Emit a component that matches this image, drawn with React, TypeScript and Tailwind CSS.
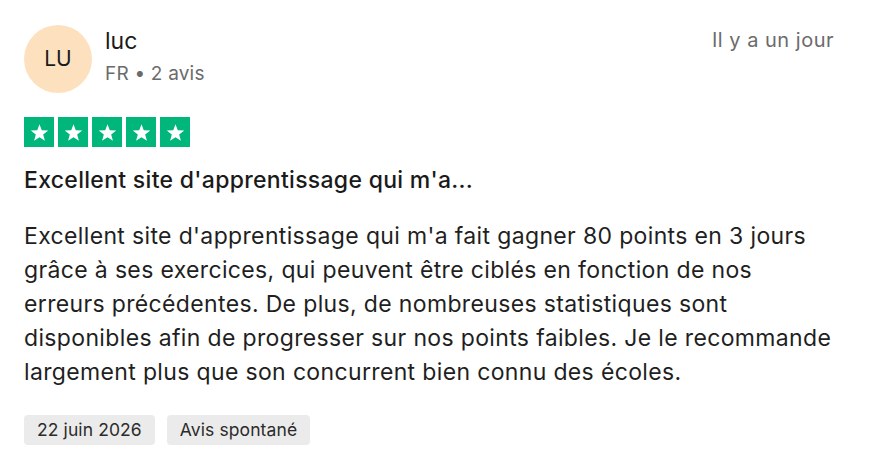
const Star = () => (
  <div className="flex h-[30px] w-[30px] items-center justify-center bg-[#00b67a]">
    <svg viewBox="0 0 24 24" className="h-[21px] w-[21px]" fill="#ffffff">
      <path d="M12 2.5l2.6 6.9 7.4.3-5.8 4.6 2 7.1L12 17.4l-6.2 4 2-7.1L2 9.7l7.4-.3z" />
    </svg>
  </div>
);

const Tag = ({ children }: { children: React.ReactNode }) => (
  <span className="flex h-[30px] items-center rounded-[4px] bg-[#ebebeb] px-[13px] text-[17.5px] tracking-[0.1px] text-[#2b2b2b]">
    {children}
  </span>
);

export default function App() {
  return (
    <div className="h-[466px] w-[886px] bg-white pl-6 pr-[52px] pt-[25px] font-['Inter','Noto_Sans',sans-serif] text-[#1a1a1a]">
      <div className="flex items-start justify-between">
        <div className="flex items-start gap-[13px]">
          <div className="flex h-[68px] w-[68px] items-center justify-center rounded-full bg-[#fde1bf] text-[21px] text-[#1a1a1a]">
            LU
          </div>
          <div className="flex flex-col pt-[2px]">
            <span className="text-[23px] leading-[28px] text-[#1a1a1a]">luc</span>
            <span className="mt-[7px] text-[19px] leading-[24px] tracking-[0.2px] text-[#6b6b6b]">FR • 2 avis</span>
          </div>
        </div>
        <span className="pt-[3px] text-[20px] leading-[24px] tracking-[0.5px] text-[#6b6b6b]">Il y a un jour</span>
      </div>

      <div className="mt-6 flex gap-[4px]">
        <Star />
        <Star />
        <Star />
        <Star />
        <Star />
      </div>

      <h2 className="mt-[19px] text-[23px] font-medium leading-[28px] tracking-[0.3px] text-[#1a1a1a]">
        Excellent site d'apprentissage qui m'a...
      </h2>

      <p className="mt-[25px] whitespace-nowrap text-[23px] leading-[34px] tracking-[0.35px] text-[#1f1f1f]">
        Excellent site d'apprentissage qui m'a fait gagner 80 points en 3 jours
        <br />
        grâce à ses exercices, qui peuvent être ciblés en fonction de nos
        <br />
        erreurs précédentes. De plus, de nombreuses statistiques sont
        <br />
        disponibles afin de progresser sur nos points faibles. Je le recommande
        <br />
        largement plus que son concurrent bien connu des écoles.
      </p>

      <div className="mt-[26px] flex gap-3">
        <Tag>22 juin 2026</Tag>
        <Tag>Avis spontané</Tag>
      </div>
    </div>
  );
}
